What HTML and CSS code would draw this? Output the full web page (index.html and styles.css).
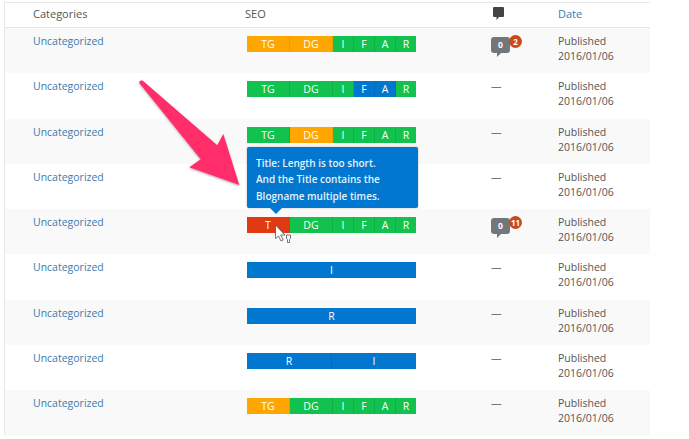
FILE: index.html
```html
<!DOCTYPE html>
<html lang="en">
<head>
    <meta charset="UTF-8">
    <title>Posts</title>
    <link rel="stylesheet" href="styles.css">
</head>
<body>
    <div class="posts">
        <div class="row head">
            <div class="cat">Categories</div>
            <div class="seo">SEO</div>
            <div class="com">
                <svg class="com-icon" width="11" height="13" viewBox="0 0 11 13"><path d="M1 0h9a1 1 0 0 1 1 1v8a1 1 0 0 1-1 1H6l-2.500 3V10H1a1 1 0 0 1-1-1V1a1 1 0 0 1 1-1z"/></svg>
            </div>
            <div class="date"><a href="#">Date</a></div>
        </div>

        <div class="row">
            <div class="cat"><a href="#">Uncategorized</a></div>
            <div class="seo"><div class="bar">
                <span class="tg o">TG</span><span class="dg o">DG</span><span class="sm">I</span><span class="sm">F</span><span class="sm">A</span><span class="sm">R</span>
            </div></div>
            <div class="com"><span class="bubble">0<span class="badge">2</span></span></div>
            <div class="date">Published<br>2016/01/06</div>
        </div>

        <div class="row">
            <div class="cat"><a href="#">Uncategorized</a></div>
            <div class="seo"><div class="bar">
                <span class="tg">TG</span><span class="dg">DG</span><span class="sm">I</span><span class="sm b">F</span><span class="sm b">A</span><span class="sm">R</span>
            </div></div>
            <div class="com"><span class="dash">—</span></div>
            <div class="date">Published<br>2016/01/06</div>
        </div>

        <div class="row">
            <div class="cat"><a href="#">Uncategorized</a></div>
            <div class="seo"><div class="bar">
                <span class="tg">TG</span><span class="dg o">DG</span><span class="sm">I</span><span class="sm">F</span><span class="sm">A</span><span class="sm">R</span>
            </div></div>
            <div class="com"><span class="dash">—</span></div>
            <div class="date">Published<br>2016/01/06</div>
        </div>

        <div class="row">
            <div class="cat"><a href="#">Uncategorized</a></div>
            <div class="seo"></div>
            <div class="com"><span class="dash">—</span></div>
            <div class="date">Published<br>2016/01/06</div>
        </div>

        <div class="row">
            <div class="cat"><a href="#">Uncategorized</a></div>
            <div class="seo"><div class="bar">
                <span class="tg r">T</span><span class="dg">DG</span><span class="sm">I</span><span class="sm">F</span><span class="sm">A</span><span class="sm">R</span>
            </div></div>
            <div class="com"><span class="bubble">0<span class="badge">11</span></span></div>
            <div class="date">Published<br>2016/01/06</div>
        </div>

        <div class="row">
            <div class="cat"><a href="#">Uncategorized</a></div>
            <div class="seo"><div class="bar"><span class="full b">I</span></div></div>
            <div class="com"><span class="dash">—</span></div>
            <div class="date">Published<br>2016/01/06</div>
        </div>

        <div class="row">
            <div class="cat"><a href="#">Uncategorized</a></div>
            <div class="seo"><div class="bar"><span class="full b">R</span></div></div>
            <div class="com"><span class="dash">—</span></div>
            <div class="date">Published<br>2016/01/06</div>
        </div>

        <div class="row">
            <div class="cat"><a href="#">Uncategorized</a></div>
            <div class="seo"><div class="bar"><span class="full b">R</span><span class="full b">I</span></div></div>
            <div class="com"><span class="dash">—</span></div>
            <div class="date">Published<br>2016/01/06</div>
        </div>

        <div class="row">
            <div class="cat"><a href="#">Uncategorized</a></div>
            <div class="seo"><div class="bar">
                <span class="tg o">TG</span><span class="dg">DG</span><span class="sm">I</span><span class="sm">F</span><span class="sm">A</span><span class="sm">R</span>
            </div></div>
            <div class="com"><span class="dash">—</span></div>
            <div class="date">Published<br>2016/01/06</div>
        </div>
    </div>

    <div class="tip">Title: Length is too short.<br>And the Title contains the<br>Blogname multiple times.</div>

    <!-- big arrow and mouse pointer drawn on top of the table -->
    <svg class="overlay" width="689" height="439" viewBox="0 0 689 439">
        <defs>
            <filter id="soft" x="-10%" y="-10%" width="120%" height="120%">
                <feDropShadow dx="0" dy="1" stdDeviation="1" flood-color="#000" flood-opacity="0.35"/>
            </filter>
        </defs>
        <path class="arrow" filter="url(#soft)" d="M139.300 83Q139 80 142.500 80.500L217.300 145.300L223.300 134L239.300 185L189.300 167.300L200.700 159.300Z"/>
        <path class="pointer" d="M275.500 225v13.500l3-2.500 2.500 5 2.200-1-2.500-5h4.300z"/>
        <path class="pointer" d="M286.500 235h4v3.500l-1 1v3h-2v-3l-1-1z"/>
    </svg>
</body>
</html>
```
FILE: styles.css
```css
html, body {
    margin: 0;
    padding: 0;
    background: #fff;
}

body {
    position: relative;
    width: 689px;
    height: 439px;
    overflow: hidden;
    font-family: "Open Sans", sans-serif;
    font-size: 10.5px;
    line-height: 15px;
    color: #555;
}

a {
    color: #3b7bad;
    text-decoration: none;
}

.posts {
    width: 646px;
    margin: 2px 0 0 4px;
    border: 1px solid #e8e8e8;
    border-width: 1px 0 1px 1px;
    height: 433px;
    box-sizing: border-box;
}

.row {
    display: grid;
    grid-template-columns: 242px 245px 66px 1fr;
    height: 45.300px;
    padding-top: 6px;
    box-sizing: border-box;
}

.row:nth-child(even) {
    background: #f9f9f9;
}

.row.head {
    height: 25px;
    padding-top: 3px;
    border-bottom: 1px solid #e5e5e5;
    background: #fff;
    font-size: 11px;
}

.cat {
    padding-left: 28px;
}

.head .seo {
    margin-left: -2px;
}

.bar {
    display: flex;
    width: 169px;
    height: 16px;
    margin-top: 2px;
    color: #fff;
    line-height: 16px;
    text-align: center;
}

.bar span {
    background: #12c24f;
    border-right: 1px solid #0fae46;
    box-sizing: border-box;
}

.bar span:last-child {
    border-right: 0;
}

.tg, .dg {
    width: 43px;
}

.sm, .full {
    flex: 1;
}

.bar .o {
    background: #ffa600;
    border-right-color: #f09c00;
}

.bar .b {
    background: #0277cf;
    border-right-color: #026bbb;
}

.bar .r {
    background: #e03a12;
    border-right-color: #e03a12;
}

.bubble {
    position: relative;
    display: block;
    width: 19px;
    height: 16px;
    margin: 3px 0 0 -1px;
    border-radius: 3px;
    background: #72777c;
    color: #fff;
    font-size: 8.500px;
    font-weight: 700;
    line-height: 16px;
    text-align: center;
}

.bubble:after {
    content: "";
    position: absolute;
    left: 6px;
    top: 16px;
    border-left: 4px solid #72777c;
    border-bottom: 4px solid transparent;
}

.badge {
    position: absolute;
    left: 18px;
    top: -2px;
    min-width: 13px;
    height: 13px;
    padding: 0 1px;
    box-sizing: border-box;
    border-radius: 7px;
    background: #ca4a1f;
    font-size: 8px;
    line-height: 13px;
}

.dash {
    display: block;
    margin-left: -1px;
    color: #777;
}

.com-icon {
    display: block;
    margin: 1px 0 0 1px;
    fill: #444;
}

.tip {
    position: absolute;
    left: 247px;
    top: 147px;
    width: 171px;
    height: 61px;
    padding: 8px 9px;
    box-sizing: border-box;
    background: #0277cf;
    border-radius: 2px;
    box-shadow: 0 0 2px rgba(0, 0, 0, 0.3);
    color: #e6f3fb;
    font-size: 10px;
    font-weight: 600;
    line-height: 16.300px;
}

.tip:after {
    content: "";
    position: absolute;
    left: 23px;
    top: 61px;
    border-left: 6px solid transparent;
    border-right: 6px solid transparent;
    border-top: 6px solid #0277cf;
}

.overlay {
    position: absolute;
    left: 0;
    top: 0;
}

.arrow {
    fill: #ff2d6b;
}

.pointer {
    fill: #fff;
    stroke: #555;
    stroke-width: 0.800;
}
```
